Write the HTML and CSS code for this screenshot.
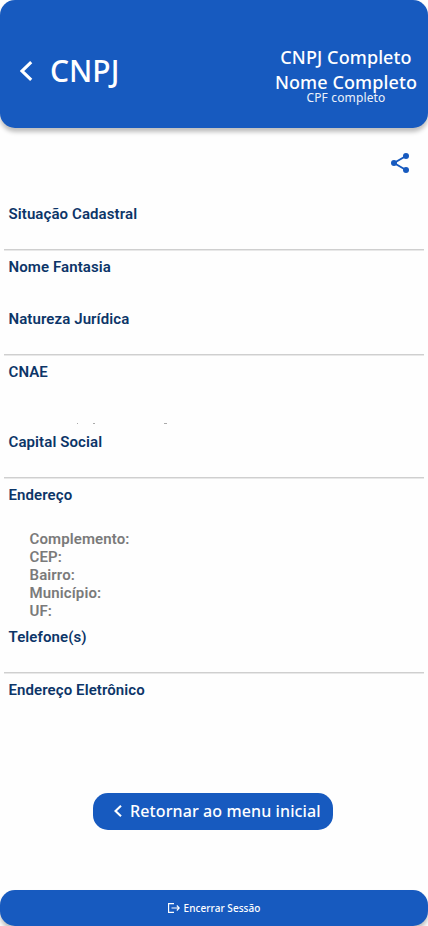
FILE: index.html
```html
<!DOCTYPE html>
<html lang="pt-BR">
<head>
<meta charset="utf-8">
<title>CNPJ</title>
<link rel="stylesheet" href="styles.css">
</head>
<body>
<div class="screen">
  <header class="header">
    <div class="heading">
      <svg class="back" width="13" height="20" viewBox="0 0 13 20"><path d="M11.2 1.2 1.9 10l9.3 8.8" fill="none" stroke="currentColor" stroke-width="3.1"/></svg>
      <h1 class="title">CNPJ</h1>
    </div>
    <div class="user">
      <span class="user-name">CNPJ Completo</span>
      <span class="user-name">Nome Completo</span>
      <span class="user-id">CPF completo</span>
    </div>
  </header>
  <div class="toolbar">
    <svg class="share" width="18" height="20" viewBox="0 0 18 20"><path d="M15 3 3 10l12 7" fill="none" stroke="currentColor" stroke-width="1.9"/><g fill="currentColor"><circle cx="15" cy="3" r="3"/><circle cx="3" cy="10" r="3"/><circle cx="15" cy="17" r="3"/></g></svg>
  </div>
  <main class="details">
    <section class="field ruled"><h2>Situação Cadastral</h2></section>
    <section class="field"><h2>Nome Fantasia</h2></section>
    <section class="field ruled"><h2>Natureza Jurídica</h2></section>
    <section class="field activity">
      <h2>CNAE</h2>
      <svg class="marks" width="100" height="2" viewBox="0 0 100 2" fill="currentColor"><rect x="4" width="1" height="1"/><rect x="20" width="2" height="1"/><rect x="91" width="3" height="1"/></svg>
    </section>
    <section class="field ruled"><h2>Capital Social</h2></section>
    <section class="field address">
      <h2>Endereço</h2>
      <ul class="lines">
        <li>Complemento:</li>
        <li>CEP:</li>
        <li>Bairro:</li>
        <li>Município:</li>
        <li>UF:</li>
      </ul>
    </section>
    <section class="field ruled"><h2>Telefone(s)</h2></section>
    <section class="field"><h2>Endereço Eletrônico</h2></section>
  </main>
  <button class="return">
    <svg width="8" height="12" viewBox="0 0 8 12"><path d="M7 .8 1.5 6 7 11.2" fill="none" stroke="currentColor" stroke-width="2.1"/></svg>
    <span>Retornar ao menu inicial</span>
  </button>
  <footer class="footer">
    <svg width="12" height="10" viewBox="0 0 12 10" fill="none" stroke="currentColor" stroke-width="1.15"><path d="M6 .6H.6v8.8H6M3.5 5h7.5M8.8 2.5 11.3 5 8.8 7.5"/></svg>
    <span>Encerrar Sessão</span>
  </footer>
</div>
</body>
</html>
```

FILE: styles.css
```css
* {
  box-sizing: border-box;
}

body {
  margin: 0;
  background: #fefefe;
  font-family: "Noto Sans", sans-serif;
}

.screen {
  display: flex;
  flex-direction: column;
  width: 428px;
  height: 926px;
  overflow: hidden;
}

.header {
  display: flex;
  justify-content: space-between;
  height: 128px;
  padding: 45px 11px 0 20px;
  border-radius: 15px;
  background: #175abf;
  color: #fff;
  box-shadow: 0 4px 4px rgba(0, 0, 0, 0.25);
}

.heading {
  display: flex;
  align-items: center;
  gap: 17px;
  height: 51px;
}

.title {
  margin: 0;
  font-size: 30px;
  font-weight: 500;
  line-height: 41px;
}

.user {
  display: flex;
  flex-direction: column;
  align-items: center;
}

.user-name {
  font-size: 18px;
  font-weight: 500;
  line-height: 25px;
  letter-spacing: 0.1px;
}

.user-id {
  margin-top: -5px;
  font-size: 12px;
  line-height: 16px;
  letter-spacing: 0.15px;
  color: #edf2fa;
}

.toolbar {
  display: flex;
  justify-content: flex-end;
  height: 69px;
  padding: 25px 19px 0 0;
  color: #175abf;
}

.details {
  height: 596px;
  padding: 0 4px;
  font-family: Roboto, sans-serif;
}

.field {
  height: 52px;
  padding: 8px 4.5px 0;
}

.field h2 {
  margin: 0;
  color: #0c3568;
  font-size: 15px;
  font-weight: 600;
  line-height: 18px;
  letter-spacing: 0.1px;
}

.ruled {
  height: 53px;
  border-bottom: 1px solid #cfcfcf;
  box-shadow: 0 1px 0 #e8e8e8;
}

.activity {
  height: 70px;
}

.marks {
  display: block;
  margin: 42px 0 0 64px;
  color: #aaa;
}

.address {
  height: 142px;
}

.lines {
  margin: 26px 0 0;
  padding: 0 0 0 21px;
  list-style: none;
  color: #7a7a7a;
  font-size: 15px;
  font-weight: 600;
  line-height: 18px;
  letter-spacing: 0.12px;
}

.return {
  display: flex;
  align-items: center;
  gap: 8px;
  width: 240px;
  height: 37px;
  margin: 0 0 0 93px;
  padding: 0 0 1px 21px;
  border: 0;
  border-radius: 15px;
  background: #175abf;
  color: #fff;
  font: 500 16px/22px "Noto Sans", sans-serif;
  letter-spacing: 0.11px;
  white-space: nowrap;
}

.footer {
  display: flex;
  align-items: center;
  justify-content: center;
  gap: 4px;
  height: 36px;
  margin-top: 60px;
  border-radius: 15px;
  background: #175abf;
  color: #fff;
  font-size: 10px;
  font-weight: 500;
  line-height: 14px;
  letter-spacing: 0.05px;
  box-shadow: 0 4px 4px rgba(0, 0, 0, 0.25);
}
```
